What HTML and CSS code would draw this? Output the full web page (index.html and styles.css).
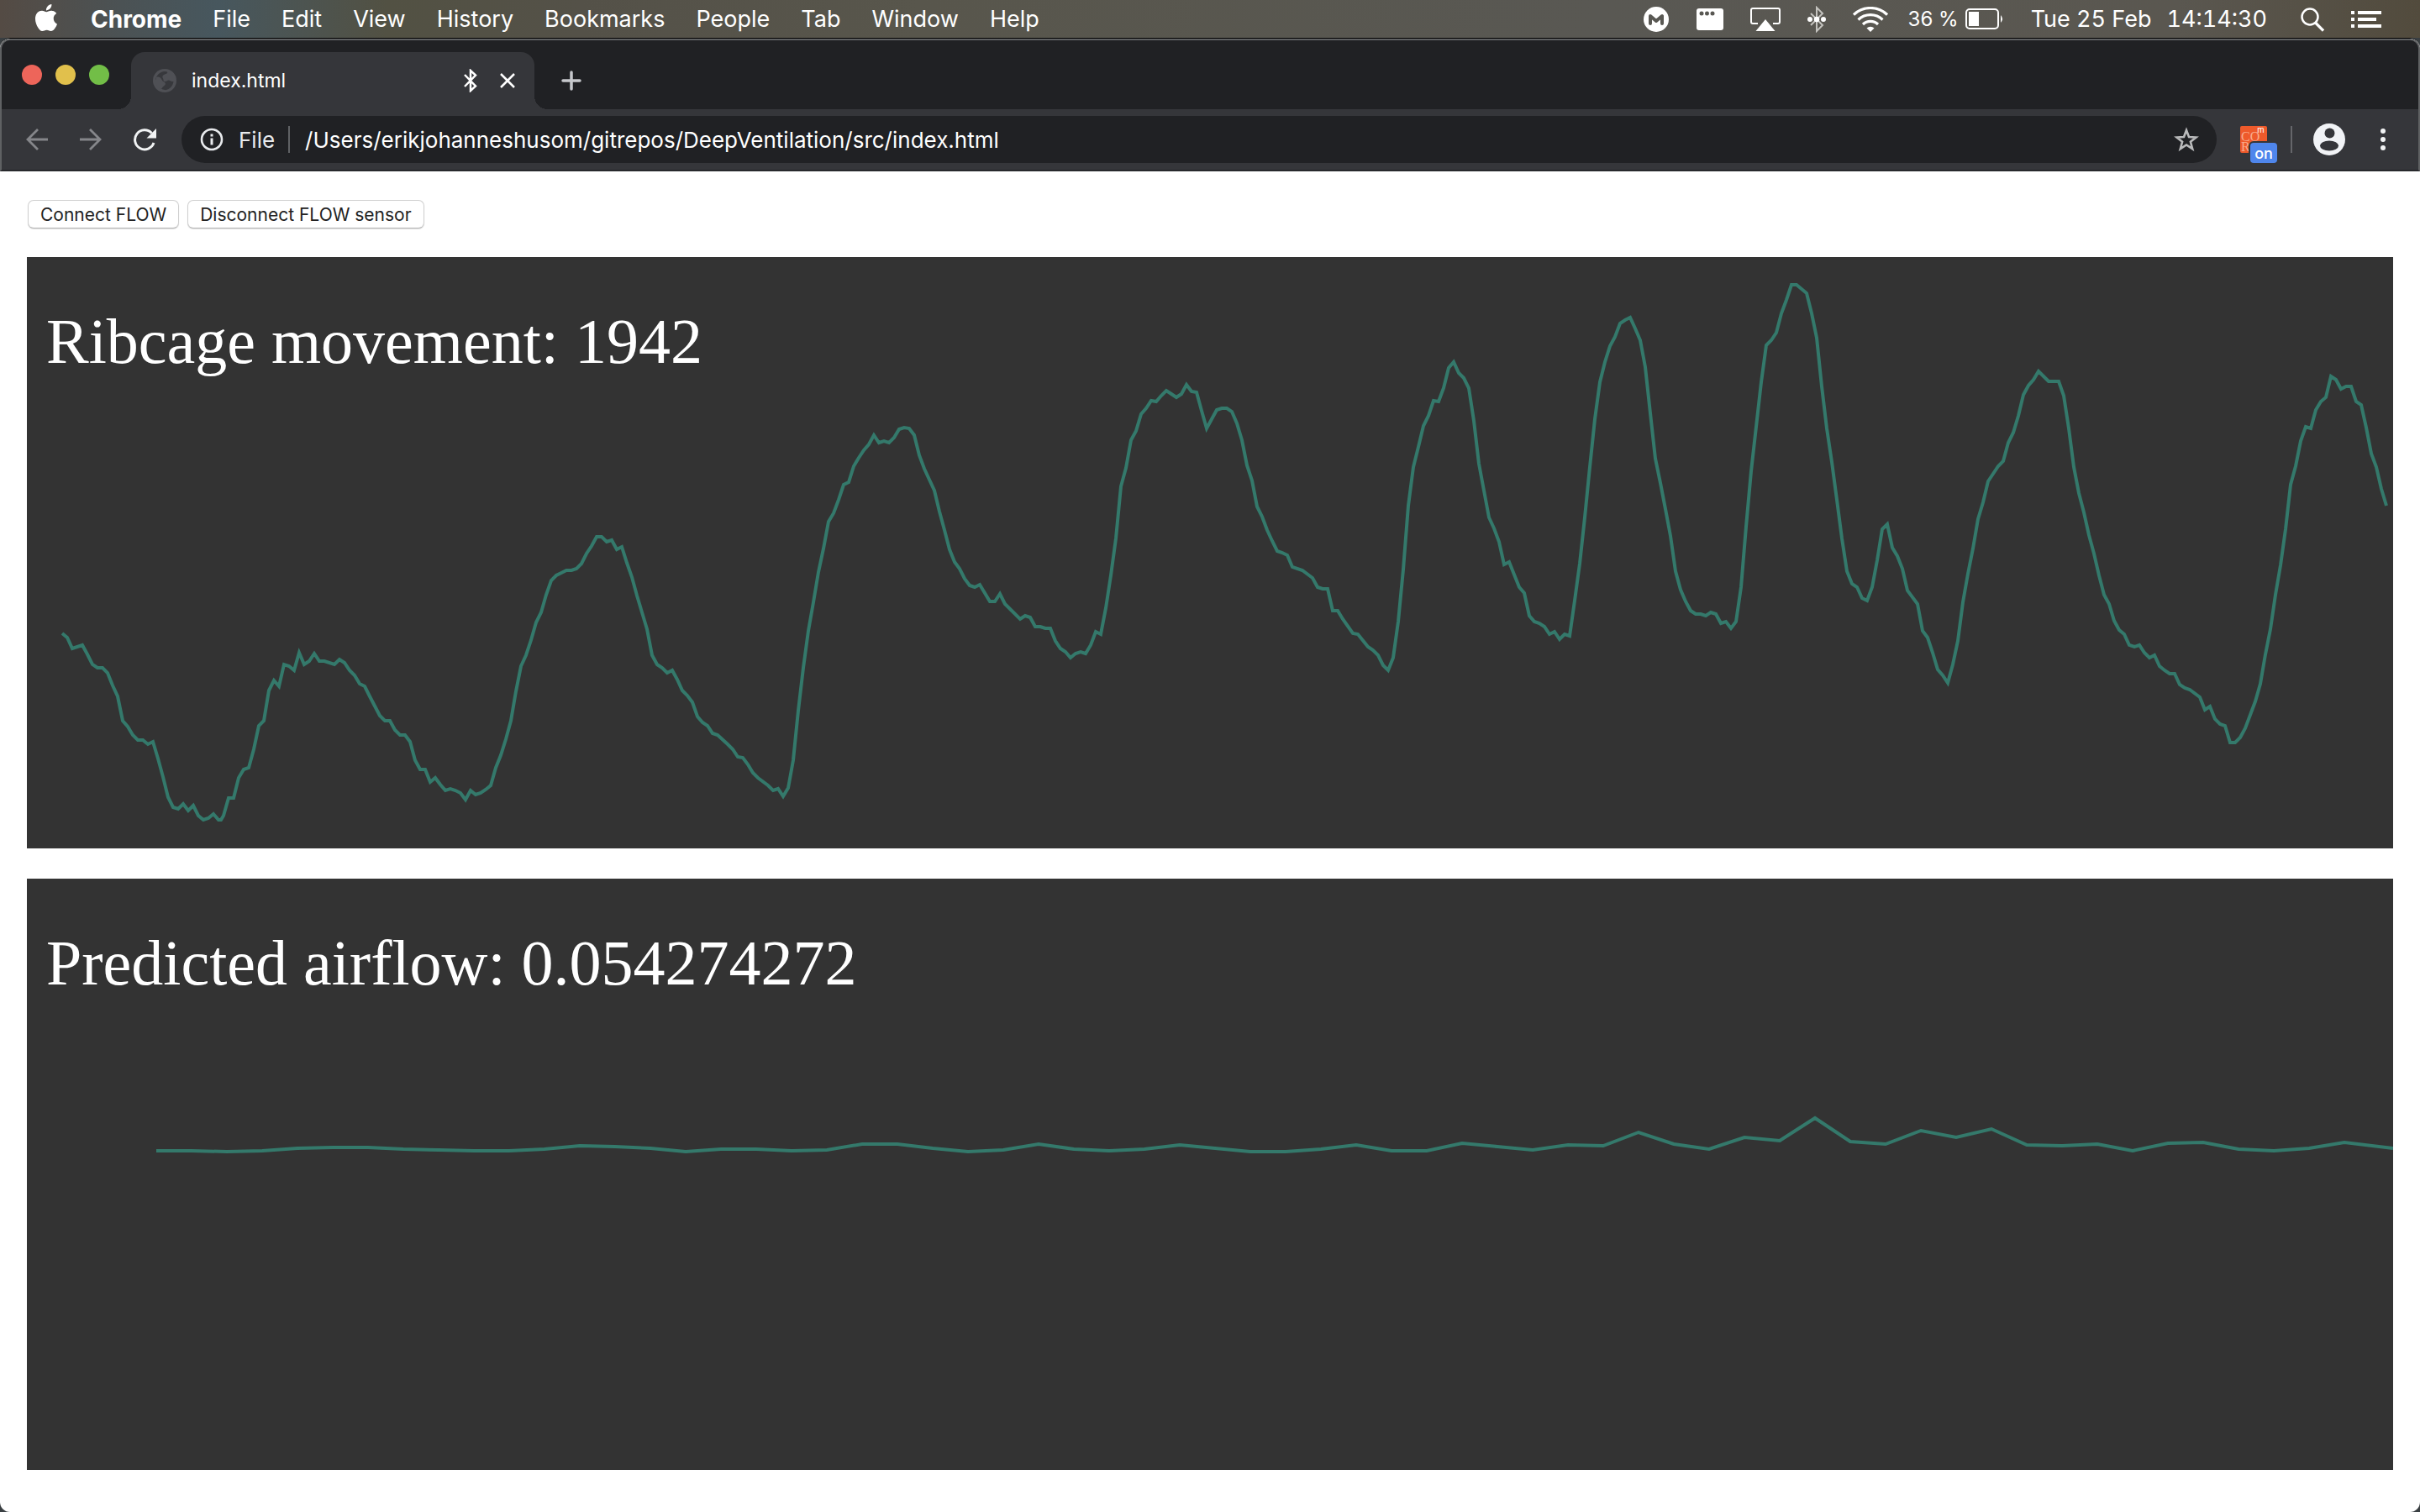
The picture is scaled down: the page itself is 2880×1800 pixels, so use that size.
FILE: index.html
```html
<!DOCTYPE html>
<html lang="en">
<head>
<meta charset="utf-8">
<title>index.html</title>
<link rel="stylesheet" href="styles.css">
</head>
<body>
<header class="menubar">
  <nav class="menus" aria-label="Application menu">
    <button class="menu apple" aria-label="Apple menu">
      <svg width="32" height="32" viewBox="0 0 24 24" fill="#fff"><path d="M12.152 6.896c-.948 0-2.415-1.078-3.96-1.04-2.04.027-3.91 1.183-4.961 3.014-2.117 3.675-.546 9.103 1.519 12.09 1.013 1.454 2.208 3.09 3.792 3.039 1.52-.065 2.09-.987 3.935-.987 1.831 0 2.35.987 3.96.948 1.637-.026 2.676-1.48 3.676-2.948 1.156-1.688 1.636-3.325 1.662-3.415-.039-.013-3.182-1.221-3.22-4.857-.026-3.04 2.48-4.494 2.597-4.559-1.429-2.09-3.623-2.324-4.39-2.376-2-.156-3.675 1.09-4.61 1.09zM15.53 3.83c.843-1.012 1.4-2.427 1.245-3.83-1.207.052-2.662.805-3.532 1.818-.78.896-1.454 2.338-1.273 3.714 1.338.104 2.715-.688 3.559-1.701"/></svg>
    </button>
    <button class="menu app-name">Chrome</button>
    <button class="menu">File</button>
    <button class="menu">Edit</button>
    <button class="menu">View</button>
    <button class="menu">History</button>
    <button class="menu">Bookmarks</button>
    <button class="menu">People</button>
    <button class="menu">Tab</button>
    <button class="menu">Window</button>
    <button class="menu">Help</button>
  </nav>
  <div class="status">
    <svg width="32" height="32" viewBox="0 0 32 32"><circle cx="16" cy="16" r="15" fill="#fff"/><path d="M9 21V12l7 6 7-6v9" fill="none" stroke="#595853" stroke-width="4" stroke-linecap="round" stroke-linejoin="round"/></svg>
    <svg width="32" height="26" viewBox="0 0 32 26"><rect width="32" height="26" rx="3" fill="#fff"/><g fill="#595853"><circle cx="6" cy="6" r="2.5"/><circle cx="12.500" cy="6" r="2.500"/><circle cx="19" cy="6" r="2.500"/></g></svg>
    <svg width="36" height="28" viewBox="0 0 36 28"><path d="M9 19H3a2 2 0 0 1-2-2V3a2 2 0 0 1 2-2h30a2 2 0 0 1 2 2v14a2 2 0 0 1-2 2h-6" fill="none" stroke="#fff" stroke-width="2"/><path d="M18 14 29.500 28h-23z" fill="#fff"/></svg>
    <svg width="22" height="32" viewBox="0 0 22 32"><path d="M4 9l14 14-7 7V2l7 7L4 23" fill="none" stroke="#c4c3bf" stroke-width="2"/><g fill="#fff"><circle cx="3" cy="16" r="3"/><circle cx="11" cy="16" r="3.300"/><circle cx="19" cy="16" r="3"/></g></svg>
    <svg class="wifi" width="42" height="30" viewBox="0 0 42 30"><g fill="none" stroke="#fff" stroke-width="3.200"><path d="M1 9.500a29 29 0 0 1 40 0"/><path d="M6.500 15.500a21 21 0 0 1 29 0"/><path d="M12 21a13 13 0 0 1 18 0"/></g><path d="M21 30l-4.500-4.500a6.500 6.500 0 0 1 9 0z" fill="#fff"/></svg>
    <div class="battery">
      <span>36 %</span>
      <svg width="46" height="26" viewBox="0 0 46 26"><rect x="1" y="1" width="38" height="23" rx="4" fill="none" stroke="#fff" stroke-width="2"/><rect x="4" y="4" width="12" height="17" fill="#fff"/><path d="M42 8q4 4.500 0 9z" fill="#fff"/></svg>
    </div>
    <div class="clock"><span>Tue 25 Feb</span><time>14:14:30</time></div>
    <svg width="28" height="30" viewBox="0 0 28 30" fill="none" stroke="#fff" stroke-width="2.500"><circle cx="11" cy="12" r="9.500"/><path d="M17.500 19 27 28.500" stroke-width="3.200"/></svg>
    <svg width="36" height="20" viewBox="0 0 36 20" fill="#fff"><path d="M0 0h4v4H0zM8 0h28v4H8zM0 8h4v4H0zM8 8h22v4H8zM0 16h4v4H0zM8 16h28v4H8z"/></svg>
  </div>
</header>

<div class="browser">
  <div class="chrome">
    <div class="tabstrip">
      <div class="lights">
        <button class="light close" aria-label="Close window"></button>
        <button class="light minimize" aria-label="Minimize window"></button>
        <button class="light zoom" aria-label="Zoom window"></button>
      </div>
      <div class="tab">
        <svg width="28" height="28" viewBox="0 0 28 28"><circle cx="14" cy="14" r="14" fill="#4f5055"/><path d="M3 13C4 8 8 3.500 14 3l3 .5c1 2-2 2.500-4 3.500-2 1-2 3-1 4.500s0 3 1.500 3.500c3 .5 3.500-1.500 5-1.500 2 0 2.500 2 6 1.500-.5 5-4.500 9.500-9.500 10.200-2.500-.7-4-.7-5.500-1.700-1-2.500 3.500-1.500 3.500-4 0-2-3.500-2.500-4.500-3.500-2-2.500-4-3-6.500-3z" fill="#37383c"/><path d="M4 10c3-1 5 0 6 2s2 3 4 4c2 2 0 4-2 5l-2 3C6 22 3 18 3 14z" fill="#4f5055"/></svg>
        <span class="tab-title">index.html</span>
        <svg class="tab-bluetooth" width="20" height="28" viewBox="0 0 20 28" fill="none" stroke="#fff" stroke-width="2.500"><path d="M3 7l13 13.500L10 26V2l6 5.500L3 21"/></svg>
        <button class="icon-button" aria-label="Close tab"><svg width="20" height="20" viewBox="0 0 20 20" stroke="#fff" stroke-width="2.500"><path d="M2 2l16 16M18 2 2 18"/></svg></button>
      </div>
      <button class="icon-button new-tab" aria-label="New tab"><svg width="24" height="24" viewBox="0 0 24 24" stroke="#c6c8cc" stroke-width="3.500" stroke-linecap="round"><path d="M12 2v20M2 12h20"/></svg></button>
    </div>
    <div class="toolbar">
      <button class="icon-button" aria-label="Back"><svg width="28" height="28" viewBox="0 0 28 28" fill="none" stroke="#85868a" stroke-width="2.800"><path d="M27 14H3M15 2 3 14l12 12"/></svg></button>
      <button class="icon-button" aria-label="Forward"><svg width="28" height="28" viewBox="0 0 28 28" fill="none" stroke="#85868a" stroke-width="2.800"><path d="M1 14h24M13 2l12 12-12 12"/></svg></button>
      <button class="icon-button reload" aria-label="Reload"><svg width="28" height="28" viewBox="0 0 28 28"><path d="M22.500 6.500A11.500 11.500 0 1 0 25 18" fill="none" stroke="#f1f3f4" stroke-width="3"/><path d="M28 1v11.500H16.500z" fill="#f1f3f4"/></svg></button>
      <div class="omnibox">
        <button class="site-info">
          <svg width="28" height="28" viewBox="0 0 28 28"><circle cx="14" cy="14" r="12" fill="none" stroke="#e8eaed" stroke-width="2.600"/><path d="M12.500 7.500h3v3h-3zM12.500 12.500h3v8h-3z" fill="#e8eaed"/></svg>
          <span>File</span>
        </button>
        <input class="url" type="text" aria-label="Address" value="/Users/erikjohanneshusom/gitrepos/DeepVentilation/src/index.html">
        <button class="icon-button" aria-label="Bookmark this page"><svg width="30" height="30" viewBox="0 0 30 30"><path d="M15 4l3 8 8.500.5-6.600 5.300 2.300 8.400L15 21.500l-7.200 4.700 2.300-8.400L3.500 12.500l8.500-.5z" fill="none" stroke="#b9babb" stroke-width="2.600"/></svg></button>
      </div>
      <button class="extension" aria-label="CORS extension">
        <span class="ext-icon"><span class="ext-top">CO<sup>m</sup></span><span>R</span></span>
        <span class="ext-badge">on</span>
      </button>
      <span class="divider"></span>
      <button class="icon-button avatar" aria-label="Profile"><svg width="38" height="38" viewBox="0 0 38 38"><circle cx="19" cy="19" r="19" fill="#f1f3f6"/><circle cx="19.500" cy="11.500" r="6" fill="#35363a"/><ellipse cx="19" cy="26.500" rx="11" ry="6" fill="#35363a"/></svg></button>
      <button class="icon-button" aria-label="Browser menu"><svg width="6" height="28" viewBox="0 0 6 28" fill="#f1f3f4"><circle cx="3" cy="4" r="3"/><circle cx="3" cy="14" r="3"/><circle cx="3" cy="24" r="3"/></svg></button>
    </div>
  </div>

  <main class="page">
    <div class="controls">
      <button class="control">Connect FLOW</button>
      <button class="control">Disconnect FLOW sensor</button>
    </div>
    <section class="panel">
      <h1 class="reading">Ribcage movement: 1942</h1>
      <svg class="chart" viewBox="0 0 2816 704" role="img" aria-label="Ribcage movement over time">
        <polyline class="trace" points="42,448 48,453 54,466 66,462 72,473 78,485 84,489 90,489 96,495 102,510 108,523 114,552 120,559 126,569 132,575 138,575 144,580 150,577 156,597 162,619 168,643 174,655 180,657 186,651 192,659 198,653 204,665 210,670 216,668 222,663 228,670 231,670 234,665 240,644 246,644 252,620 258,610 264,608 270,586 276,558 282,552 288,516 294,504 300,511 306,485 312,487 318,492 324,471 330,485 336,481 342,472 348,481 354,481 366,485 372,479 378,483 384,492 390,498 396,508 402,511 408,523 420,546 426,552 432,552 438,563 444,569 450,569 456,577 462,599 468,610 474,610 480,625 486,620 492,628 498,635 504,633 510,635 516,638 522,646 528,635 534,640 540,638 546,634 552,629 558,608 564,593 570,574 576,552 582,517 588,487 594,474 600,456 606,435 612,423 618,402 624,385 630,379 636,376 642,373 648,373 654,371 660,365 666,353 672,344 678,333 684,333 690,339 696,337 702,348 708,345 714,364 720,381 726,403 732,423 738,443 744,474 750,485 756,489 762,495 768,492 774,503 780,516 786,522 792,530 798,547 804,554 810,558 816,567 822,569 834,580 840,586 846,595 852,596 858,604 864,614 870,620 882,629 888,635 894,633 900,642 906,632 912,599 918,540 924,489 930,445 936,411 942,375 948,347 954,315 960,305 966,289 972,271 978,268 984,249 990,239 996,230 1002,223 1008,212 1014,221 1020,219 1026,221 1032,215 1038,205 1044,203 1050,204 1056,212 1062,236 1068,252 1074,265 1080,278 1086,303 1092,325 1098,348 1104,363 1110,371 1116,383 1122,391 1128,393 1134,390 1140,400 1146,410 1152,410 1158,401 1164,413 1182,431 1188,427 1194,429 1200,440 1206,440 1212,442 1218,442 1224,457 1230,466 1236,470 1242,477 1248,472 1254,470 1260,472 1266,462 1272,446 1278,449 1284,418 1290,379 1296,335 1302,273 1308,251 1314,218 1320,207 1326,187 1332,180 1338,171 1344,172 1350,165 1356,159 1362,163 1368,167 1374,163 1380,152 1386,160 1392,161 1398,183 1404,204 1410,193 1416,182 1422,180 1428,180 1434,184 1440,198 1446,218 1452,248 1458,266 1464,297 1470,309 1476,325 1482,338 1488,350 1494,352 1500,355 1506,369 1518,373 1530,382 1536,393 1542,395 1548,395 1554,421 1560,421 1566,431 1578,448 1584,449 1596,464 1602,468 1608,474 1614,486 1620,492 1626,477 1632,434 1638,372 1644,296 1650,250 1656,226 1662,201 1668,189 1674,171 1680,172 1686,156 1692,132 1698,125 1704,138 1710,144 1716,156 1722,195 1728,246 1734,278 1740,310 1746,323 1752,339 1758,366 1764,363 1770,378 1776,393 1782,400 1788,427 1794,434 1800,436 1806,440 1812,449 1818,446 1824,455 1830,449 1836,451 1842,409 1848,365 1854,310 1860,250 1866,193 1872,149 1878,125 1884,106 1890,95 1896,79 1902,75 1908,72 1914,85 1920,99 1926,131 1932,186 1938,240 1944,269 1950,300 1956,332 1962,374 1968,396 1974,410 1980,421 1986,425 1992,425 1998,427 2004,423 2010,425 2016,436 2022,434 2028,442 2034,434 2040,393 2046,321 2052,255 2058,202 2064,149 2070,105 2076,99 2082,90 2088,67 2094,51 2100,33 2106,33 2118,43 2124,67 2130,96 2136,154 2142,204 2148,244 2154,289 2160,335 2166,374 2172,389 2178,393 2184,406 2190,409 2196,393 2202,361 2208,324 2214,318 2220,346 2226,356 2232,371 2238,397 2250,413 2256,445 2262,453 2268,471 2274,491 2280,498 2286,507 2292,485 2298,457 2304,411 2310,377 2316,347 2322,312 2328,292 2334,267 2340,258 2346,249 2352,243 2358,221 2364,209 2370,189 2376,164 2382,153 2388,146 2394,136 2400,142 2406,148 2418,148 2424,165 2430,204 2436,250 2442,281 2448,304 2454,331 2460,353 2466,379 2472,402 2478,413 2484,433 2490,444 2496,449 2502,462 2508,464 2514,462 2520,471 2526,477 2532,474 2538,487 2544,492 2550,496 2556,496 2562,509 2568,513 2574,515 2586,524 2592,539 2598,535 2604,550 2610,556 2616,558 2622,578 2628,578 2634,572 2640,561 2646,545 2652,529 2658,508 2664,473 2670,443 2676,402 2682,367 2688,324 2694,271 2700,249 2706,219 2712,202 2718,204 2724,182 2730,172 2736,167 2742,142 2748,146 2754,157 2760,154 2766,154 2772,172 2778,176 2784,203 2790,234 2796,250 2802,276 2808,296"/>
      </svg>
    </section>
    <section class="panel">
      <h1 class="reading">Predicted airflow: 0.054274272</h1>
      <svg class="chart" viewBox="0 0 2816 704" role="img" aria-label="Predicted airflow over time">
        <polyline class="trace" points="154,324 196,324 238,325 280,324 322,321 364,320 406,320 448,322 490,323 532,324 574,324 616,322 658,318 700,319 742,321 784,325 826,322 868,322 910,324 952,323 994,316 1036,316 1078,321 1120,325 1162,323 1204,316 1246,322 1288,324 1330,322 1372,317 1414,321 1456,325 1498,325 1540,322 1582,317 1624,324 1666,324 1708,315 1750,319 1792,323 1834,317 1876,318 1918,302 1960,316 2002,322 2044,308 2086,312 2128,285 2170,313 2212,316 2254,300 2296,308 2338,298 2380,317 2422,318 2464,316 2506,324 2548,315 2590,314 2632,322 2674,324 2716,321 2758,314 2816,321"/>
      </svg>
    </section>
  </main>
</div>
</body>
</html>
```
FILE: styles.css
```css
* {
  box-sizing: border-box;
}

body {
  margin: 0;
  min-height: 100vh;
  display: flex;
  flex-direction: column;
  background: #3a3f42;
  font-family: Inter, "Liberation Sans", sans-serif;
}

button,
input {
  margin: 0;
  padding: 0;
  border: 0;
  background: none;
  color: inherit;
  font: inherit;
}

svg {
  display: block;
  flex: none;
}

/* System menu bar */
.menubar {
  display: flex;
  justify-content: space-between;
  align-items: center;
  height: 45px;
  padding: 0 46px 0 39px;
  color: #fff;
  font-size: 27px;
  white-space: nowrap;
  background: linear-gradient(90deg, #544b44 0%, #4b5254 5%, #47575e 9%, #525143 16%, #545148 24%, #58564c 38%, #595853 66%, #5a5750 90%, #524b3d 100%);
}

.menus {
  display: flex;
  align-items: center;
  gap: 37px;
}

.apple {
  margin-top: -4px;
}

.app-name {
  font-size: 28px;
  font-weight: 700;
}

.status {
  display: flex;
  align-items: center;
  gap: 32px;
}

.wifi {
  margin-right: -8px;
}

.battery {
  display: flex;
  align-items: center;
  gap: 8px;
  font-size: 24px;
}

.clock {
  display: flex;
  gap: 18px;
  margin-right: 8px;
  font-variant-numeric: tabular-nums;
}

/* Browser window */
.browser {
  flex: 1;
  display: flex;
  flex-direction: column;
  border-top: 1px solid #000;
  border-radius: 12px;
  overflow: hidden;
  background: #fff;
}

.chrome {
  border: 2px solid #5f6163;
  border-bottom-color: #28292c;
  border-radius: 12px 12px 0 0;
  background: #35363a;
}

.tabstrip {
  display: flex;
  height: 82px;
  padding-top: 14px;
  background: #202124;
  border-radius: 10px 10px 0 0;
}

.lights {
  display: flex;
  gap: 16px;
  width: 154px;
  padding: 15px 0 0 24px;
}

.light {
  width: 24px;
  height: 24px;
  border-radius: 50%;
}

.close {
  background: #ed655a;
}

.minimize {
  background: #e1c04c;
}

.zoom {
  background: #72be47;
}

.tab {
  position: relative;
  display: flex;
  align-items: center;
  gap: 18px;
  width: 480px;
  padding: 0 22px 0 26px;
  border-radius: 16px 16px 0 0;
  background: #35363a;
  color: #fff;
  font-size: 23px;
}

/* Flared feet where the tab meets the toolbar */
.tab::before,
.tab::after {
  content: "";
  position: absolute;
  bottom: 0;
  width: 16px;
  height: 16px;
}

.tab::before {
  right: 100%;
  background: radial-gradient(circle at 0 0, #202124 16px, #35363a 16px);
}

.tab::after {
  left: 100%;
  background: radial-gradient(circle at 100% 0, #202124 16px, #35363a 16px);
}

.tab-title {
  flex: 1;
}

.tab-bluetooth {
  margin-right: 6px;
}

.icon-button {
  display: flex;
  align-items: center;
  justify-content: center;
}

.new-tab {
  margin-left: 32px;
}

.toolbar {
  display: flex;
  align-items: center;
  height: 72px;
  padding: 0 39px 0 28px;
  gap: 36px;
}

.reload {
  margin-right: -6px;
}

.omnibox {
  flex: 1;
  display: flex;
  align-items: center;
  height: 56px;
  padding: 0 21px 0 22px;
  border-radius: 28px;
  background: #202124;
  font-size: 26px;
}

.site-info {
  display: flex;
  align-items: center;
  gap: 18px;
  height: 32px;
  padding-right: 16px;
  border-right: 2px solid #5f6164;
  color: #e8eaed;
}

.url {
  flex: 1;
  padding-left: 18px;
  color: #fff;
}

.extension {
  position: relative;
  margin-left: -8px;
}

.ext-icon {
  display: block;
  width: 32px;
  height: 32px;
  border-radius: 2px;
  overflow: hidden;
  background: #ee5a2b;
  color: #f8ab8c;
  font: 16px/12px "Liberation Serif", serif;
  text-align: left;
}

.ext-icon span {
  display: block;
  padding-left: 1px;
}

.ext-icon .ext-top {
  display: flex;
  padding-top: 6px;
  line-height: 13px;
}

.ext-icon sup {
  margin: -8px 0 0 -3px;
  color: #fff;
  font: 10px/13px "Liberation Sans", sans-serif;
}

.ext-badge {
  position: absolute;
  left: 12px;
  top: 20px;
  width: 32px;
  height: 24px;
  border-radius: 4px;
  background: #4f86ec;
  box-shadow: 0 0 0 2px #35363a;
  color: #fff;
  font-size: 18px;
  font-weight: 500;
  line-height: 26px;
  text-align: center;
}

.divider {
  width: 2px;
  height: 32px;
  margin: 0 -11px 0 -8px;
  background: #65666a;
}

.avatar {
  margin-right: 6px;
}

/* Document */
.page {
  flex: 1;
  display: flex;
  flex-direction: column;
  gap: 36px;
  padding: 34px 32px 48px;
}

.controls {
  display: flex;
  gap: 10px;
  height: 32px;
  padding-left: 1px;
}

.control {
  height: 34px;
  padding: 2px 14px 0;
  border: 1px solid #cfcfcf;
  border-bottom-color: #b4b4b4;
  border-radius: 7px;
  background: #fff;
  box-shadow: 0 1px 1px #00000022;
  color: #222;
  font-size: 21px;
  line-height: 30px;
}

.panel {
  display: grid;
  background: #333;
}

.reading,
.chart {
  grid-area: 1 / 1;
}

.reading {
  margin: 0;
  padding: 56px 0 0 23px;
  color: #fff;
  font: 76px/88px "Liberation Serif", serif;
  font-variant-ligatures: common-ligatures;
}

.chart {
  width: 100%;
  height: auto;
}

.trace {
  fill: none;
  stroke: #34796b;
  stroke-width: 4;
}
```
